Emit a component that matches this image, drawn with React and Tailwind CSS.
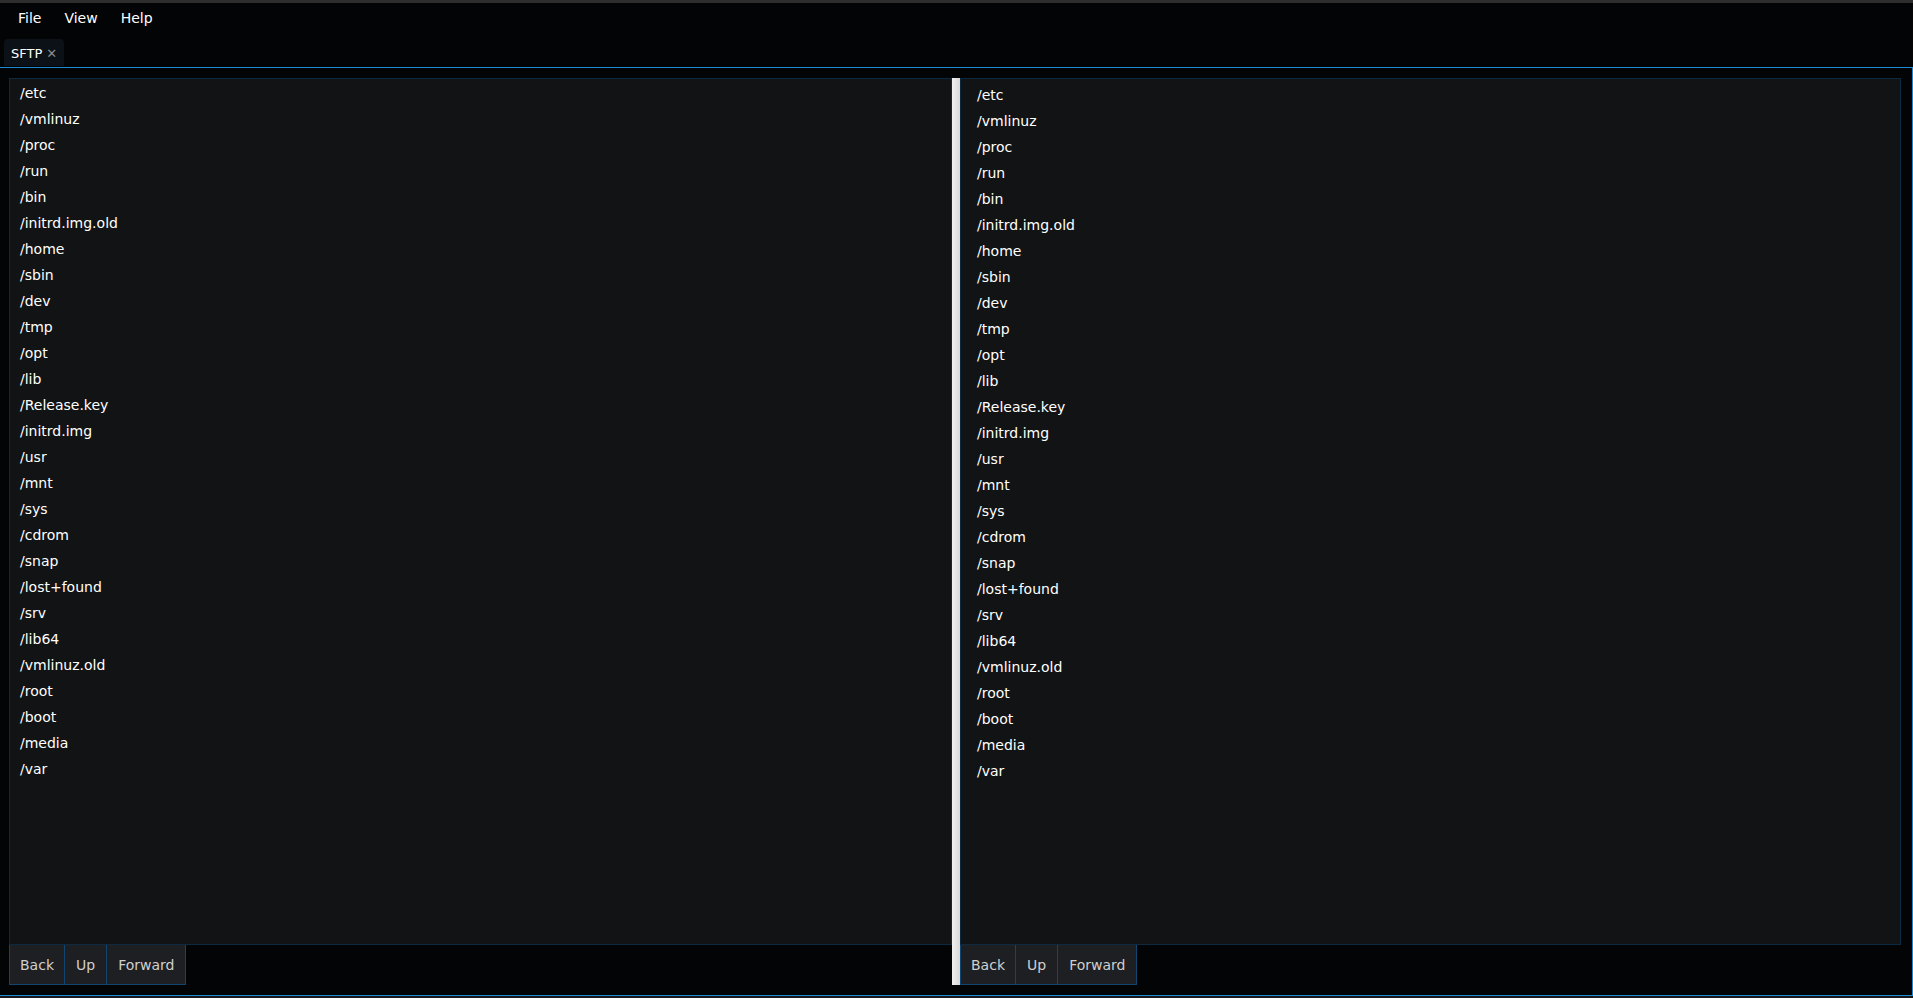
import React from 'react'

const PATHS = [
  '/etc', '/vmlinuz', '/proc', '/run', '/bin', '/initrd.img.old', '/home', '/sbin', '/dev',
  '/tmp', '/opt', '/lib', '/Release.key', '/initrd.img', '/usr', '/mnt', '/sys', '/cdrom',
  '/snap', '/lost+found', '/srv', '/lib64', '/vmlinuz.old', '/root', '/boot', '/media', '/var'
]

function Pane({ className, listPad }) {
  return (
    <div className={`flex flex-col ${className}`}>
      <div className={`flex-1 border border-[#0c2a42] bg-[#121314] ${listPad}`}>
        {PATHS.map((p) => (
          <div key={p} className="h-[26px] leading-[26px] text-[14px] text-white">
            {p}
          </div>
        ))}
      </div>
      <div className="flex h-[40px] text-[14px] text-[#cfcfcf]">
        <button className="px-[10px] pt-[2px] bg-[#1e1f22] border border-t-0 border-[#10466f]">Back</button>
        <button className="px-[11px] pt-[2px] bg-[#1e1f22] border border-t-0 border-l-0 border-[#10466f]">Up</button>
        <button className="px-[11px] pt-[2px] bg-[#1e1f22] border border-t-0 border-l-0 border-[#10466f]">Forward</button>
      </div>
    </div>
  )
}

export default function App() {
  return (
    <div className="w-[1913px] h-[998px] bg-[#030405] flex flex-col font-['DejaVu_Sans',sans-serif] overflow-hidden">
      <div className="h-[3px] bg-[#2e2e2e]" />

      {/* menu bar */}
      <div className="h-[30px] flex items-center pl-[6px] text-[14px] text-white">
        <span className="px-[12px]">File</span>
        <span className="px-[11px]">View</span>
        <span className="px-[12px]">Help</span>
      </div>

      {/* tabs */}
      <div className="h-[34px] pt-[6px] pl-[4px]">
        <div className="w-[60px] h-[27px] rounded-t-[4px] bg-[#0c1117] flex items-center pl-[7px] pt-[2px] gap-[4px]">
          <span className="text-[13px] text-white">SFTP</span>
          <span className="text-[13px] font-bold text-[#8a8a8a] leading-none">✕</span>
        </div>
      </div>

      {/* main panel */}
      <div className="flex-1 border-t border-r border-b border-[#1d8ad6] pt-[10px] pl-[9px] pr-[11px] pb-[10px] flex">
        <Pane className="w-[943px]" listPad="pl-[10px] pt-[1px]" />
        <div className="w-[8px] bg-gradient-to-r from-[#f0f0f0] to-[#d8d8d8]" />
        <Pane className="flex-1" listPad="pl-[16px] pt-[3px]" />
      </div>
      <div className="h-[2px] bg-[#1a1a1a]" />
    </div>
  )
}
